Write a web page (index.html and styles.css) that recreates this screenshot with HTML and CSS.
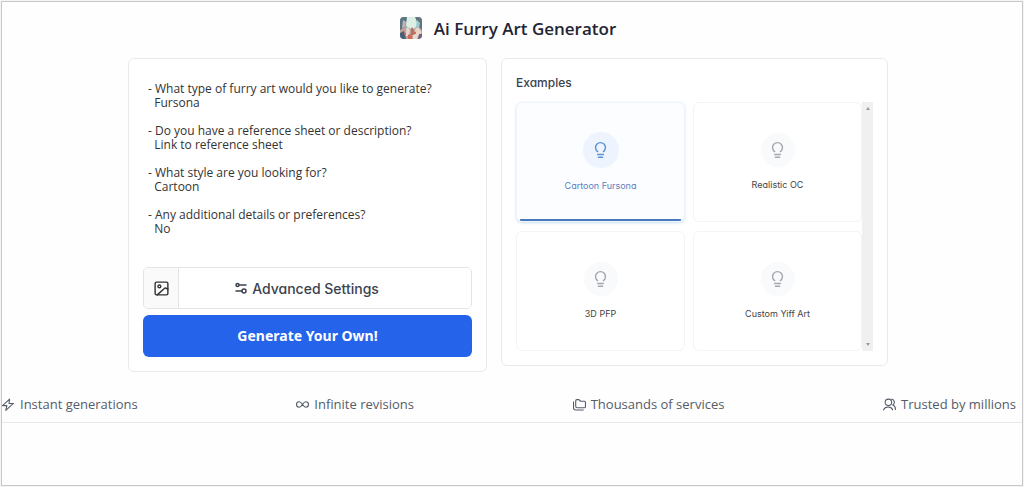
FILE: index.html
```html
<!DOCTYPE html>
<html lang="en">
<head>
  <meta charset="UTF-8" />
  <meta name="viewport" content="width=device-width, initial-scale=1.0"/>
  <title>Ai Furry Art Generator</title>
  <link rel="stylesheet" href="styles.css">
</head>
<body>

  <div class="page">
    <header class="header">
      <!-- logo -->
      <svg class="logo" viewBox="0 0 22 22" aria-hidden="true">
        <defs>
          <clipPath id="logoClip"><rect width="22" height="22" rx="4"/></clipPath>
          <filter id="soft"><feGaussianBlur stdDeviation="0.6"/></filter>
        </defs>
        <g clip-path="url(#logoClip)">
          <rect width="22" height="22" fill="#8fa9ab"/>
          <g filter="url(#soft)">
            <path d="M0 0h8L5 9 0 15z" fill="#5d7582"/>
            <path d="M15 0h7v13l-4-4z" fill="#5f767e"/>
            <path d="M7 0h8l3 8-5 5-7-4z" fill="#dcefe4"/>
            <path d="M3 3l3 2-1 5-3 1z" fill="#c3b2b8"/>
            <path d="M17 3l3 3-1 5-3-2z" fill="#9bcbce"/>
            <path d="M0 13l5-3 6 3 6-3 5 4v8H0z" fill="#c2a199"/>
            <path d="M0 16l4-2 2 8H0z" fill="#466078"/>
            <path d="M6 12l2-3 2 4-1 6H6z" fill="#e2d5cb"/>
            <path d="M11 12l1-2 2 3v5h-3z" fill="#b9705f"/>
            <path d="M15 12l3-2 3 4v5h-5z" fill="#ead3c7"/>
            <path d="M8 18l2-1 2 2v3H8z" fill="#cf6a55"/>
            <path d="M13 18l3-1 2 3-1 2h-4z" fill="#e9d9cf"/>
            <path d="M19 17h3v5h-4z" fill="#6c6480"/>
            <circle cx="5" cy="17" r="1" fill="#d85b4a"/>
            <circle cx="15" cy="16" r="1" fill="#c95a4a"/>
          </g>
        </g>
      </svg>
      <h1>Ai Furry Art Generator</h1>
    </header>

    <main class="container">
      <form class="card prompt-card">
        <textarea class="prompt" aria-label="Prompt" spellcheck="false">- What type of furry art would you like to generate?
  Fursona

- Do you have a reference sheet or description?
  Link to reference sheet

- What style are you looking for?
  Cartoon

- Any additional details or preferences?
  No</textarea>

        <div class="settings-row">
          <button type="button" class="image-btn" aria-label="Add image">
            <svg class="icon" viewBox="0 0 24 24"><rect x="3" y="3" width="18" height="18" rx="2"/><circle cx="9" cy="9" r="2"/><path d="M21 13l-2-1a2 2 0 0 0-3 0L6 21"/></svg>
          </button>
          <button type="button" class="advanced-btn">
            <svg class="icon icon-small" viewBox="0 0 24 24"><circle cx="5" cy="6" r="3"/><path d="M9 6h13M2 18h12"/><circle cx="18" cy="18" r="4"/></svg>
            Advanced Settings
          </button>
        </div>

        <button type="submit" class="generate-btn">Generate Your Own!</button>
      </form>

      <section class="card examples-card">
        <h2>Examples</h2>
        <div class="examples">
          <div class="examples-grid">
            <button type="button" class="example active">
              <span class="bulb"><svg class="icon" viewBox="0 0 24 24"><path d="M8 15a7 7 0 1 1 8 0M8 19h8M9 23h6"/></svg></span>
              Cartoon Fursona
            </button>
            <button type="button" class="example">
              <span class="bulb"><svg class="icon" viewBox="0 0 24 24"><path d="M8 15a7 7 0 1 1 8 0M8 19h8M9 23h6"/></svg></span>
              Realistic OC
            </button>
            <button type="button" class="example">
              <span class="bulb"><svg class="icon" viewBox="0 0 24 24"><path d="M8 15a7 7 0 1 1 8 0M8 19h8M9 23h6"/></svg></span>
              3D PFP
            </button>
            <button type="button" class="example">
              <span class="bulb"><svg class="icon" viewBox="0 0 24 24"><path d="M8 15a7 7 0 1 1 8 0M8 19h8M9 23h6"/></svg></span>
              Custom Yiff Art
            </button>
          </div>
          <!-- scrollbar -->
          <div class="scrollbar" aria-hidden="true">
            <span class="arrow arrow-up"></span>
            <span class="arrow arrow-down"></span>
          </div>
        </div>
      </section>
    </main>

    <ul class="features">
      <li>
        <svg class="icon icon-feature" viewBox="0 0 24 24"><path d="M14 2L1 14h8l-2 9L21 10h-8z"/></svg>
        Instant generations
      </li>
      <li>
        <svg class="icon icon-feature" viewBox="0 0 24 24"><path d="M12 12c-2-3-4-5-6-5a5 5 0 0 0 0 10c2 0 4-2 6-5s4-5 6-5a5 5 0 0 1 0 10c-2 0-4-2-6-5z"/></svg>
        Infinite revisions
      </li>
      <li>
        <svg class="icon icon-feature" viewBox="0 0 24 24"><path d="M7 3h4l3 3h7a2 2 0 0 1 2 2v8a2 2 0 0 1-2 2H8a3 3 0 0 1-3-3V5a2 2 0 0 1 2-2z"/><path d="M1 7v11a4 4 0 0 0 4 4h14"/></svg>
        Thousands of services
      </li>
      <li>
        <svg class="icon icon-feature" viewBox="0 0 24 24"><circle cx="10" cy="8" r="6"/><path d="M1 22a9 8 0 0 1 17 0M16 2a6 6 0 0 1 2 11c3 1 5 4 5 8"/></svg>
        Trusted by millions
      </li>
    </ul>
  </div>

</body>
</html>
```
FILE: styles.css
```css
* {
  box-sizing: border-box;
}

body {
  margin: 0;
  padding: 1px;
  background-color: #f4f4f4;
  color: #1f2937;
  font-family: "Open Sans", "Noto Sans", sans-serif;
}

.page {
  min-height: calc(100vh - 2px);
  border: 1px solid #c8c8c8;
  background-color: #fefefe;
}

.header {
  display: flex;
  justify-content: center;
  align-items: center;
  gap: 12px;
  height: 56px;
  padding: 0 8px 4px 0;
}

.logo {
  width: 22px;
  height: 22px;
}

h1 {
  margin: 0;
  font-size: 17px;
  font-weight: 600;
  color: #1f2533;
}

.container {
  display: grid;
  grid-template-columns: 359fr 387fr;
  align-items: start;
  gap: 14px;
  max-width: 768px;
  margin: 0 auto;
  padding-right: 8px;
}

.card {
  padding: 14px;
  border: 1px solid #e8eaed;
  border-radius: 6px;
  background-color: #fff;
}

.prompt-card {
  display: flex;
  flex-direction: column;
  gap: 6px;
}

.prompt {
  display: block;
  width: 100%;
  height: 188px;
  padding: 9px 5px;
  border: none;
  outline: none;
  resize: none;
  background: none;
  color: #333;
  font-family: inherit;
  font-size: 12px;
  line-height: 14px;
}

button {
  padding: 0;
  border: none;
  cursor: pointer;
  font-family: Inter, sans-serif;
  font-feature-settings: "cv11";
}

.settings-row {
  display: flex;
  height: 42px;
  border: 1px solid #e2e4e8;
  border-radius: 5px;
  overflow: hidden;
}

.image-btn {
  display: flex;
  justify-content: center;
  align-items: center;
  width: 35px;
  border-right: 1px solid #e2e4e8;
  background-color: #fafafa;
  color: #333;
}

.advanced-btn {
  display: flex;
  flex: 1;
  justify-content: center;
  align-items: center;
  gap: 5px;
  padding-right: 36px;
  background-color: #fff;
  color: #3b424e;
  font-size: 14px;
  font-weight: 500;
}

.generate-btn {
  height: 42px;
  padding-bottom: 2px;
  border-radius: 6px;
  background-color: #2563eb;
  color: #fff;
  font-family: "Noto Sans", "Open Sans", sans-serif;
  font-size: 14px;
  font-weight: 700;
}

.icon {
  width: 17px;
  height: 17px;
  fill: none;
  stroke: currentColor;
  stroke-width: 2;
  stroke-linecap: round;
  stroke-linejoin: round;
}

.icon-small {
  width: 12px;
  height: 12px;
  stroke-width: 3;
}

h2 {
  margin: 0 0 9px;
  color: #3b424e;
  font-family: Inter, sans-serif;
  font-feature-settings: "cv11";
  font-size: 12px;
  font-weight: 500;
  line-height: 20px;
}

.examples {
  display: flex;
}

.examples-grid {
  display: grid;
  flex: 1;
  grid-template-columns: 1fr 1fr;
  gap: 9px 8px;
}

.example {
  display: flex;
  flex-direction: column;
  justify-content: center;
  align-items: center;
  gap: 12px;
  height: 120px;
  padding-bottom: 2px;
  border: 1px solid #f3f4f6;
  border-radius: 6px;
  background-color: #fff;
  color: #444;
  font-size: 9px;
}

.bulb {
  display: flex;
  justify-content: center;
  align-items: center;
  width: 34px;
  height: 34px;
  border-radius: 50%;
  background-color: #f9fafc;
  color: #a3a8b0;
}

/* selected card has a blue bar along the bottom */
.example.active {
  border-color: #eef4fb;
  background: #fcfdff linear-gradient(#4878bd, #4878bd) bottom / calc(100% - 6px) 2px no-repeat;
  color: #5a7fc0;
  box-shadow: 0 1px 3px #cfe0f5;
}

.active .bulb {
  width: 36px;
  height: 36px;
  background-color: #edf4fe;
  color: #5c94d0;
}

.scrollbar {
  display: flex;
  flex-direction: column;
  justify-content: space-between;
  align-items: center;
  width: 11px;
  padding: 5px 0;
  background-color: #f0f0f0;
}

.arrow {
  border: 2px solid transparent;
}

.arrow-up {
  border-top: none;
  border-bottom: 3px solid #999;
}

.arrow-down {
  border-top: 3px solid #999;
  border-bottom: none;
}

.features {
  display: flex;
  justify-content: space-between;
  margin: 22px 0 0;
  padding: 0 6px 8px 0;
  border-bottom: 1px solid #e8e8ea;
  list-style: none;
  color: #555c68;
  font-size: 13px;
  line-height: 20px;
}

.features li {
  display: flex;
  align-items: center;
  gap: 5px;
}

.icon-feature {
  width: 13px;
  height: 13px;
}
```
